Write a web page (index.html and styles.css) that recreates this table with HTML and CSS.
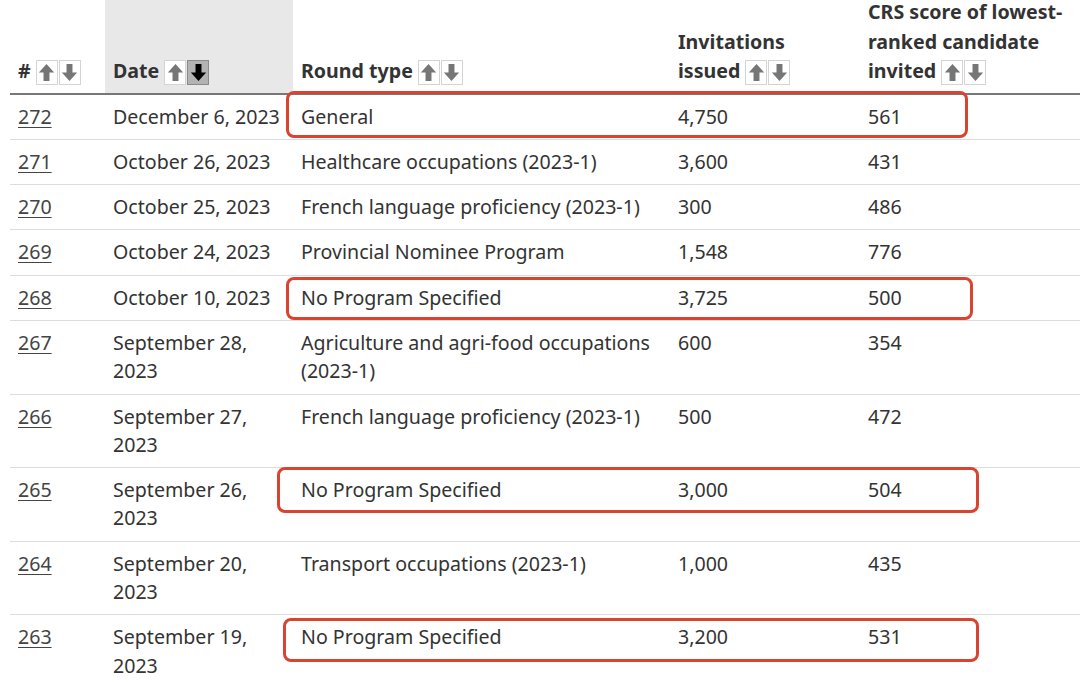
FILE: index.html
```html
<!DOCTYPE html>
<html lang="en">
<head>
<meta charset="utf-8">
<title>Express Entry rounds</title>
<link rel="stylesheet" href="styles.css">
</head>
<body>
<div class="wrap">
  <table class="rounds">
    <colgroup>
      <col class="c-num"><col class="c-date"><col class="c-type"><col class="c-inv"><col class="c-crs">
    </colgroup>
    <thead>
      <tr>
        <th><span class="nw"># <span class="sort"><span class="btn"><svg viewBox="0 0 20 24"><path d="M10 2 L19 12 L13.5 12 L13.5 22 L6.5 22 L6.5 12 L1 12 Z"/></svg></span><span class="btn"><svg viewBox="0 0 20 24"><path d="M10 22 L19 12 L13.5 12 L13.5 2 L6.5 2 L6.5 12 L1 12 Z"/></svg></span></span></span></th>
        <th class="active-col"><span class="nw">Date <span class="sort"><span class="btn"><svg viewBox="0 0 20 24"><path d="M10 2 L19 12 L13.5 12 L13.5 22 L6.5 22 L6.5 12 L1 12 Z"/></svg></span><span class="btn on"><svg viewBox="0 0 20 24"><path d="M10 22 L19 12 L13.5 12 L13.5 2 L6.5 2 L6.5 12 L1 12 Z"/></svg></span></span></span></th>
        <th>Round <span class="nw">type <span class="sort"><span class="btn"><svg viewBox="0 0 20 24"><path d="M10 2 L19 12 L13.5 12 L13.5 22 L6.5 22 L6.5 12 L1 12 Z"/></svg></span><span class="btn"><svg viewBox="0 0 20 24"><path d="M10 22 L19 12 L13.5 12 L13.5 2 L6.5 2 L6.5 12 L1 12 Z"/></svg></span></span></span></th>
        <th>Invitations <span class="nw">issued <span class="sort"><span class="btn"><svg viewBox="0 0 20 24"><path d="M10 2 L19 12 L13.5 12 L13.5 22 L6.5 22 L6.5 12 L1 12 Z"/></svg></span><span class="btn"><svg viewBox="0 0 20 24"><path d="M10 22 L19 12 L13.5 12 L13.5 2 L6.5 2 L6.5 12 L1 12 Z"/></svg></span></span></span></th>
        <th>CRS score of lowest-ranked candidate <span class="nw">invited <span class="sort"><span class="btn"><svg viewBox="0 0 20 24"><path d="M10 2 L19 12 L13.5 12 L13.5 22 L6.5 22 L6.5 12 L1 12 Z"/></svg></span><span class="btn"><svg viewBox="0 0 20 24"><path d="M10 22 L19 12 L13.5 12 L13.5 2 L6.5 2 L6.5 12 L1 12 Z"/></svg></span></span></span></th>
      </tr>
    </thead>
    <tbody>
      <tr><td><a href="#">272</a></td><td>December 6, 2023</td><td>General</td><td>4,750</td><td>561</td></tr>
      <tr><td><a href="#">271</a></td><td>October 26, 2023</td><td>Healthcare occupations (2023-1)</td><td>3,600</td><td>431</td></tr>
      <tr><td><a href="#">270</a></td><td>October 25, 2023</td><td>French language proficiency (2023-1)</td><td>300</td><td>486</td></tr>
      <tr><td><a href="#">269</a></td><td>October 24, 2023</td><td>Provincial Nominee Program</td><td>1,548</td><td>776</td></tr>
      <tr><td><a href="#">268</a></td><td>October 10, 2023</td><td>No Program Specified</td><td>3,725</td><td>500</td></tr>
      <tr><td><a href="#">267</a></td><td>September 28, 2023</td><td>Agriculture and agri-food occupations (2023-1)</td><td>600</td><td>354</td></tr>
      <tr><td><a href="#">266</a></td><td>September 27, 2023</td><td>French language proficiency (2023-1)</td><td>500</td><td>472</td></tr>
      <tr><td><a href="#">265</a></td><td>September 26, 2023</td><td>No Program Specified</td><td>3,000</td><td>504</td></tr>
      <tr><td><a href="#">264</a></td><td>September 20, 2023</td><td>Transport occupations (2023-1)</td><td>1,000</td><td>435</td></tr>
      <tr><td><a href="#">263</a></td><td>September 19, 2023</td><td>No Program Specified</td><td>3,200</td><td>531</td></tr>
    </tbody>
  </table>
  <div class="mark m1"></div>
  <div class="mark m2"></div>
  <div class="mark m3"></div>
  <div class="mark m4"></div>
</div>
</body>
</html>
```

FILE: styles.css
```css
html, body {
  margin: 0;
  padding: 0;
  background: #fff;
  overflow: hidden;
}
body {
  font-family: "Noto Sans", "Open Sans", sans-serif;
  font-size: 19.6px;
  color: #333;
}
.wrap {
  position: relative;
  width: 1080px;
  height: 686px;
  overflow: hidden;
}
.rounds {
  margin-top: -11px;
  margin-left: 10px;
  border-collapse: collapse;
  table-layout: fixed;
  width: 1080px;
}
.c-num { width: 95px; }
.c-date { width: 188px; }
.c-type { width: 377px; }
.c-inv { width: 190px; }
.c-crs { width: 230px; }
th, td {
  text-align: left;
  padding: 8px;
  line-height: 28.3px;
}
th {
  vertical-align: bottom;
  font-weight: 700;
  padding-bottom: 7px;
  border-bottom: 2px solid #777;
  line-height: 29.5px;
}
td {
  vertical-align: top;
  border-bottom: 1px solid #ddd;
}
th.active-col {
  background: #e8e8e8;
}
.nw {
  white-space: nowrap;
}
a {
  color: #444;
  text-decoration: underline;
  text-underline-offset: 3px;
  text-decoration-thickness: 1px;
}
.sort {
  display: inline-flex;
  vertical-align: -5px;
}
.btn {
  display: inline-flex;
  align-items: center;
  justify-content: center;
  width: 22px;
  height: 25px;
  border: 1px solid #d4d4d4;
  background: #fff;
  box-sizing: border-box;
}
.btn + .btn {
  margin-left: 1px;
}
.btn svg {
  width: 17px;
  height: 21px;
  fill: #767676;
}
.btn.on {
  background: #b3b3b3;
  border-color: #8a8a8a;
}
.btn.on svg {
  fill: #000;
}
.mark {
  position: absolute;
  border: 3px solid #d9432f;
  border-radius: 8px;
  box-sizing: border-box;
}
.m1 { left: 286px; top: 91px; width: 682px; height: 47px; }
.m2 { left: 286px; top: 277px; width: 687px; height: 43px; }
.m3 { left: 277px; top: 467px; width: 702px; height: 46px; }
.m4 { left: 283px; top: 618px; width: 696px; height: 44px; }
```
